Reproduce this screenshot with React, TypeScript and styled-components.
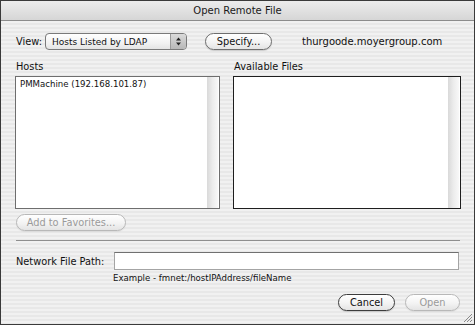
import styled, { createGlobalStyle } from 'styled-components';

const GlobalStyle = createGlobalStyle`
  html, body {
    margin: 0;
    padding: 0;
    background: #ffffff;
  }
  * {
    box-sizing: border-box;
  }
`;

const Window = styled.div`
  position: relative;
  width: 475px;
  height: 325px;
  display: flex;
  flex-direction: column;
  border: 1px solid #3a3a3a;
  font-family: 'DejaVu Sans', 'Liberation Sans', sans-serif;
  font-size: 9.8px;
  color: #111;
  background: repeating-linear-gradient(
    to bottom,
    #f1f1f1 0px,
    #f1f1f1 2px,
    #e8e8e8 2px,
    #e8e8e8 4px
  );
`;

const TitleBar = styled.div`
  height: 20px;
  flex: none;
  display: flex;
  align-items: center;
  justify-content: center;
  border-bottom: 1px solid #8c8c8c;
  background: linear-gradient(to bottom, #ececec, #d6d6d6);
  font-size: 10px;
  color: #1a1a1a;
`;

const Body = styled.div`
  flex: 1;
  display: flex;
  flex-direction: column;
  padding: 0 14px 0 14px;
`;

const ViewRow = styled.div`
  display: flex;
  align-items: center;
  height: 17px;
  margin-top: 12px;
`;

const Label = styled.span`
  width: 30px;
  padding-left: 1px;
`;

const PopUp = styled.div`
  width: 142px;
  height: 17px;
  display: flex;
  align-items: center;
  border: 1px solid #7a7a7a;
  border-radius: 4px;
  background: linear-gradient(to bottom, #ffffff, #f2f2f2 60%, #e4e4e4);
  overflow: hidden;
`;

const PopUpText = styled.span`
  flex: 1;
  padding-left: 6px;
  font-size: 9px;
  white-space: nowrap;
`;

const PopUpArrows = styled.div`
  width: 16px;
  height: 100%;
  display: flex;
  align-items: center;
  justify-content: center;
  border-left: 1px solid #9a9a9a;
  background: linear-gradient(to bottom, #dadada, #b8b8b8);
`;

const Pill = styled.button<{ $disabled?: boolean; $width: number; $strong?: boolean }>`
  width: ${({ $width }) => $width}px;
  height: 17px;
  padding: 0;
  font: inherit;
  line-height: 15px;
  border-radius: 9px;
  border: 1px solid
    ${({ $disabled, $strong }) => ($disabled ? '#b8b8b8' : $strong ? '#3c3c3c' : '#6e6e6e')};
  color: ${({ $disabled }) => ($disabled ? '#9a9a9a' : '#111')};
  background: linear-gradient(to bottom, #ffffff, #f3f3f3 55%, #e4e4e4);
  box-shadow: 0 1px 1px rgba(0, 0, 0, ${({ $disabled }) => ($disabled ? 0.06 : 0.15)});
`;

const Host = styled.span`
  margin-left: 30px;
  font-size: 10px;
  white-space: nowrap;
`;

const Gap = styled.span<{ $w: number }>`
  width: ${({ $w }) => $w}px;
  flex: none;
`;

const Columns = styled.div`
  display: grid;
  grid-template-columns: 205px 228px;
  column-gap: 13px;
  margin-top: 10px;
`;

const Column = styled.div`
  display: flex;
  flex-direction: column;
`;

const ColumnTitle = styled.div`
  height: 13px;
  line-height: 13px;
  margin-left: 1px;
  margin-bottom: 3px;
`;

const ListBox = styled.div<{ $dark?: boolean }>`
  height: 133px;
  display: flex;
  border: 1px solid ${({ $dark }) => ($dark ? '#1e1e1e' : '#6e6e6e')};
  background: #fff;
`;

const ListItems = styled.div`
  flex: 1;
  padding: 2px 4px;
  font-size: 8.6px;
  white-space: nowrap;
`;

const ScrollTrack = styled.div`
  width: 11px;
  margin: 0 1px 0 0;
  background: linear-gradient(to right, #d9d9d9, #ececec 50%, #f8f8f8);
`;

const FavRow = styled.div`
  margin-top: 5px;
  margin-left: 1px;
`;

const Separator = styled.div`
  height: 1px;
  background: #8e8e8e;
  margin: 9px 0 0 1px;
  width: 444px;
`;

const PathRow = styled.div`
  display: flex;
  align-items: center;
  margin-top: 11px;
`;

const PathLabel = styled.span`
  width: 99px;
  padding-left: 1px;
  white-space: nowrap;
`;

const PathInput = styled.div`
  width: 345px;
  height: 18px;
  border: 1px solid #a4a4a4;
  border-top-color: #707070;
  background: #fff;
`;

const Example = styled.div`
  margin-left: 98px;
  margin-top: 3px;
  height: 11px;
  line-height: 11px;
  font-size: 8.6px;
  white-space: nowrap;
`;

const ButtonRow = styled.div`
  display: flex;
  justify-content: flex-end;
  gap: 10px;
  margin-top: 10px;
`;

const Grip = styled.svg`
  position: absolute;
  right: 1px;
  bottom: 1px;
`;

const App = () => {
  return (
    <>
      <GlobalStyle />
      <Window>
        <TitleBar>Open Remote File</TitleBar>
        <Body>
          <ViewRow>
            <Label>View:</Label>
            <PopUp>
              <PopUpText>Hosts Listed by LDAP</PopUpText>
              <PopUpArrows>
                <svg width="7" height="11" viewBox="0 0 7 11">
                  <path d="M3.5 1.5 L6 4.5 H1 Z" fill="#222" />
                  <path d="M3.5 9.5 L6 6.5 H1 Z" fill="#222" />
                </svg>
              </PopUpArrows>
            </PopUp>
            <Gap $w={18} />
            <Pill $width={67}>Specify...</Pill>
            <Host>thurgoode.moyergroup.com</Host>
          </ViewRow>

          <Columns>
            <Column>
              <ColumnTitle>Hosts</ColumnTitle>
              <ListBox>
                <ListItems>PMMachine (192.168.101.87)</ListItems>
                <ScrollTrack />
              </ListBox>
            </Column>
            <Column>
              <ColumnTitle>Available Files</ColumnTitle>
              <ListBox $dark>
                <ListItems />
                <ScrollTrack />
              </ListBox>
            </Column>
          </Columns>

          <FavRow>
            <Pill $disabled $width={110}>Add to Favorites...</Pill>
          </FavRow>

          <Separator />

          <PathRow>
            <PathLabel>Network File Path:</PathLabel>
            <PathInput />
          </PathRow>
          <Example>Example - fmnet:/hostIPAddress/fileName</Example>

          <ButtonRow>
            <Pill $strong $width={57}>Cancel</Pill>
            <Pill $disabled $width={55}>Open</Pill>
          </ButtonRow>
        </Body>
        <Grip width="12" height="12" viewBox="0 0 12 12">
          <path d="M11 3 L3 11 M11 6 L6 11 M11 9 L9 11" stroke="#8a8a8a" strokeWidth="1" />
        </Grip>
      </Window>
    </>
  );
};

export default App;
